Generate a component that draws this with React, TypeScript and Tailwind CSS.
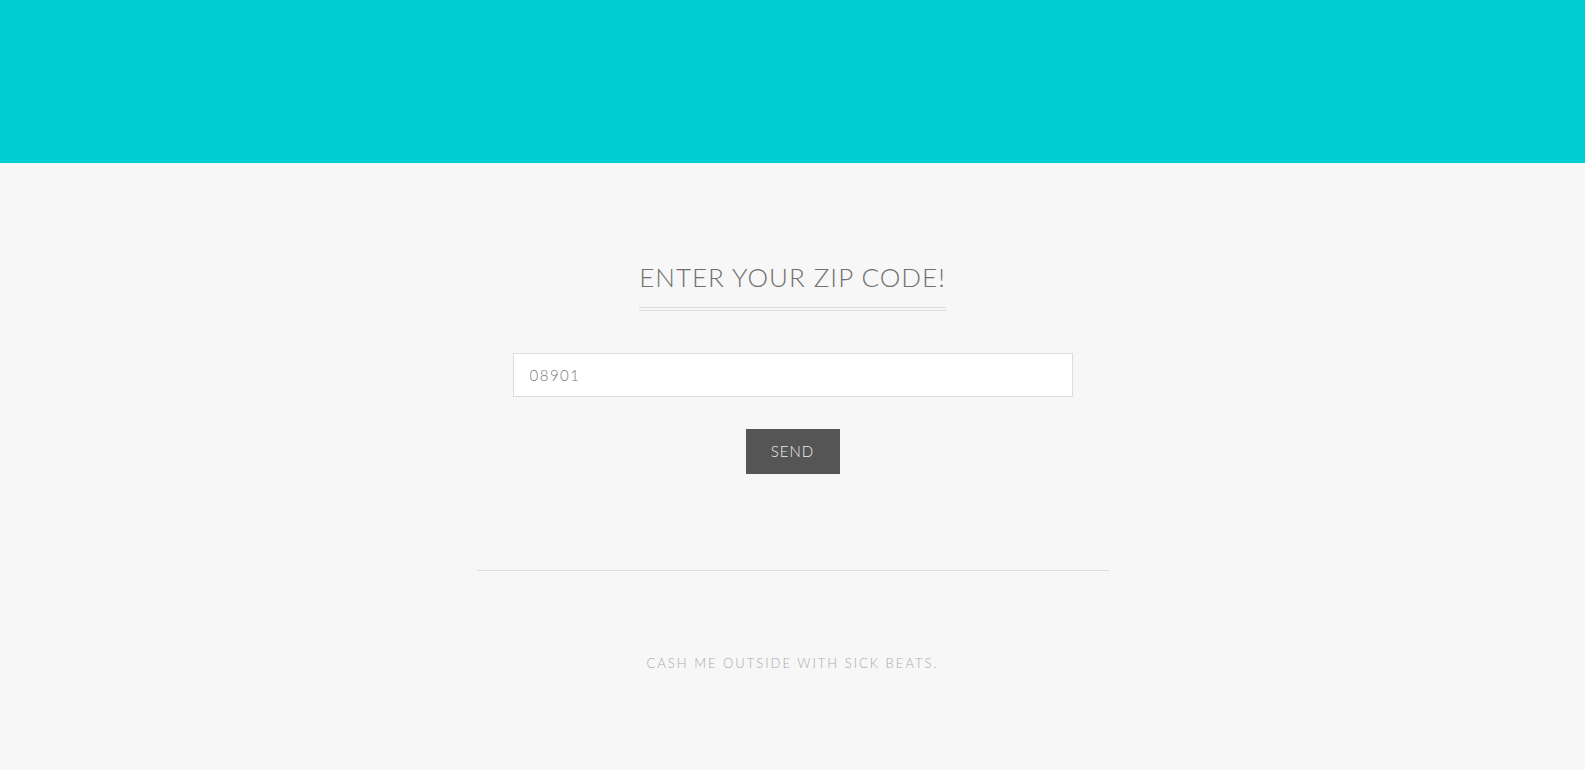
import { useState } from "react";

const App = () => {
  const [zip, setZip] = useState("08901");

  return (
    <div
      className="flex flex-col w-full min-h-screen bg-[#f7f7f7]"
      style={{ fontFamily: "Lato, 'Open Sans', sans-serif" }}
    >
      <header className="bg-[#00ced1] w-full h-[163px]" />
      <main className="flex flex-col items-center pt-[96px]">
        <div className="flex flex-col items-center">
          <h1 className="font-light text-[26px] text-[#707070] leading-[36px] tracking-[1px] uppercase">
            Enter your zip code!
          </h1>
          <div className="mt-[12px] border-y border-y-[#ddd] w-full h-[4px]" />
        </div>
        <input
          value={zip}
          onChange={(e) => setZip(e.target.value)}
          className="bg-white mt-[42px] px-[16px] border border-[#ddd] w-[560px] h-[44px] font-light text-[#777] text-[15px] tracking-[1.5px] outline-none"
        />
        <button className="bg-[#555] mt-[32px] w-[94px] h-[45px] font-light text-[#eee] text-[15px] tracking-[1px] uppercase">
          Send
        </button>
        <hr className="mt-[96px] border-t border-t-[#ddd] w-[632px]" />
        <p className="mt-[83px] font-light text-[#aaa] text-[13px] tracking-[2px] uppercase">
          Cash me outside with sick beats.
        </p>
      </main>
    </div>
  );
};

export default App;
